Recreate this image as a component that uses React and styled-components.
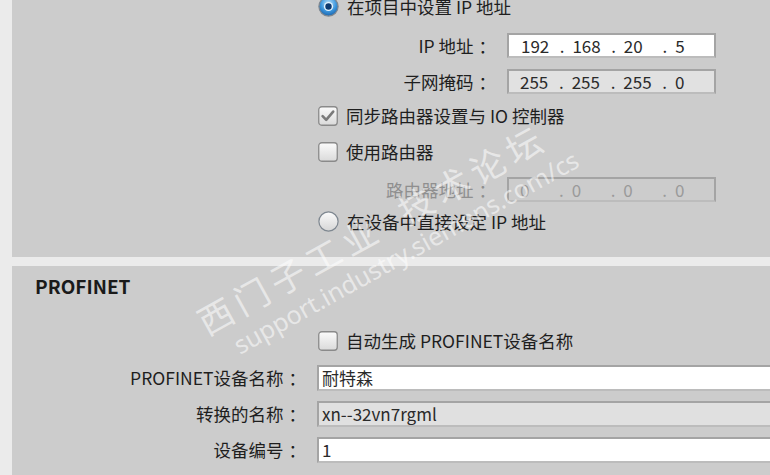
import React from "react";
import styled, { createGlobalStyle } from "styled-components";

const GlobalStyle = createGlobalStyle`
  html, body {
    margin: 0;
    padding: 0;
    background: #ebebeb;
  }
  body {
    font-family: "Noto Sans CJK SC", "Noto Sans", sans-serif;
    color: #1e1e1e;
  }
`;

const Page = styled.div`
  position: relative;
  width: 770px;
  height: 475px;
  overflow: hidden;
  box-sizing: border-box;
  padding-left: 12px;
  display: flex;
  flex-direction: column;
  gap: 9px;
  background: #ebebeb;
`;

const Panel = styled.section`
  background: #cccccc;
  margin-right: -30px;
  display: flex;
  flex-direction: column;
  box-sizing: border-box;
`;

const AddressPanel = styled(Panel)`
  height: 257px;
  flex: none;
  padding-left: 306px;
`;

const ProfinetPanel = styled(Panel)`
  flex: 1;
  padding-top: 9px;
`;

const Heading = styled.h2`
  margin: 0;
  padding-left: 23px;
  font-size: 19px;
  line-height: 22px;
  font-weight: 700;
  color: #1a1a1a;
`;

const OptionRow = styled.div`
  display: flex;
  align-items: center;
  gap: 8px;
  height: ${(p) => p.$h || 20}px;
  margin-top: ${(p) => p.$mt || 0}px;
  margin-left: ${(p) => p.$ml || 0}px;
  font-size: 17.5px;
  line-height: 20px;
  white-space: nowrap;
  svg {
    flex: none;
  }
`;

const FieldRow = styled.div`
  display: grid;
  grid-template-columns: ${(p) => p.$labelW}px ${(p) => p.$fieldW};
  column-gap: 11px;
  align-items: center;
  margin-top: ${(p) => p.$mt || 0}px;
`;

const Label = styled.span`
  text-align: right;
  white-space: nowrap;
  font-size: 17.5px;
  line-height: 20px;
  color: ${(p) => (p.$disabled ? "#8f8f8f" : "#1e1e1e")};
`;

const Colon = styled.span`
  margin-left: 5px;
`;

const Field = styled.div`
  height: ${(p) => p.$h || 25}px;
  box-sizing: border-box;
  border: 2px solid #a4a4a4;
  border-bottom-color: #bcbcbc;
  background: ${(p) => p.$bg || "#ffffff"};
  display: flex;
  align-items: center;
  padding-left: ${(p) => p.$pad || 3}px;
  font-size: 17px;
  line-height: 20px;
  color: ${(p) => (p.$disabled ? "#9a9a9a" : "#2a2a2a")};
  white-space: nowrap;
`;

const Seg = styled.span`
  width: 40px;
`;

const Dot = styled.span`
  width: 13px;
`;

const Watermark = styled.div`
  position: absolute;
  left: 190px;
  top: 306px;
  transform-origin: 0 0;
  transform: rotate(-29deg);
  pointer-events: none;
  color: rgba(255, 255, 255, 0.55);
  white-space: nowrap;
`;

const WmTitle = styled.div`
  font-size: 35px;
  line-height: 40px;
  letter-spacing: 6px;
  font-family: "Noto Sans CJK SC", sans-serif;
  word-spacing: 10px;
`;

const WmUrl = styled.div`
  font-size: 25px;
  line-height: 28px;
  margin-top: 3px;
  margin-left: 20px;
  font-family: "Noto Sans", sans-serif;
`;

function Radio({ checked }) {
  return (
    <svg width="21" height="21" viewBox="0 0 21 21">
      <defs>
        <radialGradient id="rOn" cx="50%" cy="35%" r="65%">
          <stop offset="0" stopColor="#bfe4fb" />
          <stop offset="0.6" stopColor="#3d97dd" />
          <stop offset="1" stopColor="#1a64ad" />
        </radialGradient>
        <linearGradient id="rOff" x1="0" y1="0" x2="0" y2="1">
          <stop offset="0" stopColor="#fbfbfb" />
          <stop offset="1" stopColor="#d6d6d6" />
        </linearGradient>
      </defs>
      <circle cx="10.5" cy="10.5" r="9.6" fill={checked ? "url(#rOn)" : "url(#rOff)"} stroke="#7e8790" strokeWidth="1.2" />
      {checked && (
        <>
          <circle cx="10.5" cy="10.5" r="4.6" fill="#e6f4fd" />
          <circle cx="10.5" cy="10.5" r="3.2" fill="#0d3a70" />
        </>
      )}
    </svg>
  );
}

function Check({ checked }) {
  return (
    <svg width="20" height="20" viewBox="0 0 20 20">
      <defs>
        <linearGradient id="cb" x1="0" y1="0" x2="0" y2="1">
          <stop offset="0" stopColor="#fbfbfb" />
          <stop offset="1" stopColor="#dadada" />
        </linearGradient>
      </defs>
      <rect x="0.75" y="0.75" width="18.5" height="18.5" rx="3" fill="url(#cb)" stroke="#8a8a8a" strokeWidth="1.3" />
      {checked && (
        <path d="M4.6 10.2 L8.2 13.8 L15.2 5.6" fill="none" stroke="#7a7a7a" strokeWidth="2.6" strokeLinecap="round" strokeLinejoin="round" />
      )}
    </svg>
  );
}

function IpValue({ parts }) {
  return parts.map((p, i) => (
    <React.Fragment key={i}>
      <Seg>{p}</Seg>
      {i < parts.length - 1 && <Dot>.</Dot>}
    </React.Fragment>
  ));
}

export default function App() {
  return (
    <>
      <GlobalStyle />
      <Page>
        <AddressPanel>
          <OptionRow $h={21} $mt={-4}>
            <Radio checked />
            在项目中设置 IP 地址
          </OptionRow>
          <FieldRow $labelW={178} $fieldW="209px" $mt={16}>
            <Label>
              IP 地址<Colon>：</Colon>
            </Label>
            <Field $pad={12}>
              <IpValue parts={["192", "168", "20", "5"]} />
            </Field>
          </FieldRow>
          <FieldRow $labelW={178} $fieldW="209px" $mt={11}>
            <Label>
              子网掩码<Colon>：</Colon>
            </Label>
            <Field $pad={11} $bg="#e1e1e1">
              <IpValue parts={["255", "255", "255", "0"]} />
            </Field>
          </FieldRow>
          <OptionRow $mt={12}>
            <Check checked />
            同步路由器设置与 IO 控制器
          </OptionRow>
          <OptionRow $mt={16}>
            <Check />
            使用路由器
          </OptionRow>
          <FieldRow $labelW={178} $fieldW="209px" $mt={15}>
            <Label $disabled>
              路由器地址<Colon>：</Colon>
            </Label>
            <Field $pad={11} $bg="transparent" $disabled>
              <IpValue parts={["0", "0", "0", "0"]} />
            </Field>
          </FieldRow>
          <OptionRow $h={21} $mt={9}>
            <Radio />
            在设备中直接设定 IP 地址
          </OptionRow>
        </AddressPanel>

        <ProfinetPanel>
          <Heading>PROFINET</Heading>
          <OptionRow $mt={34} $ml={306}>
            <Check />
            自动生成 PROFINET设备名称
          </OptionRow>
          <FieldRow $labelW={294} $fieldW="1fr" $mt={14}>
            <Label>
              PROFINET设备名称<Colon>：</Colon>
            </Label>
            <Field $h={26}>耐特森</Field>
          </FieldRow>
          <FieldRow $labelW={294} $fieldW="1fr" $mt={10}>
            <Label>
              转换的名称<Colon>：</Colon>
            </Label>
            <Field $h={26} $bg="#e0e0e0">
              xn--32vn7rgml
            </Field>
          </FieldRow>
          <FieldRow $labelW={294} $fieldW="1fr" $mt={10}>
            <Label>
              设备编号<Colon>：</Colon>
            </Label>
            <Field $h={26}>1</Field>
          </FieldRow>
        </ProfinetPanel>

        <Watermark>
          <WmTitle>西门子工业 技术论坛</WmTitle>
          <WmUrl>support.industry.siemens.com/cs</WmUrl>
        </Watermark>
      </Page>
    </>
  );
}
